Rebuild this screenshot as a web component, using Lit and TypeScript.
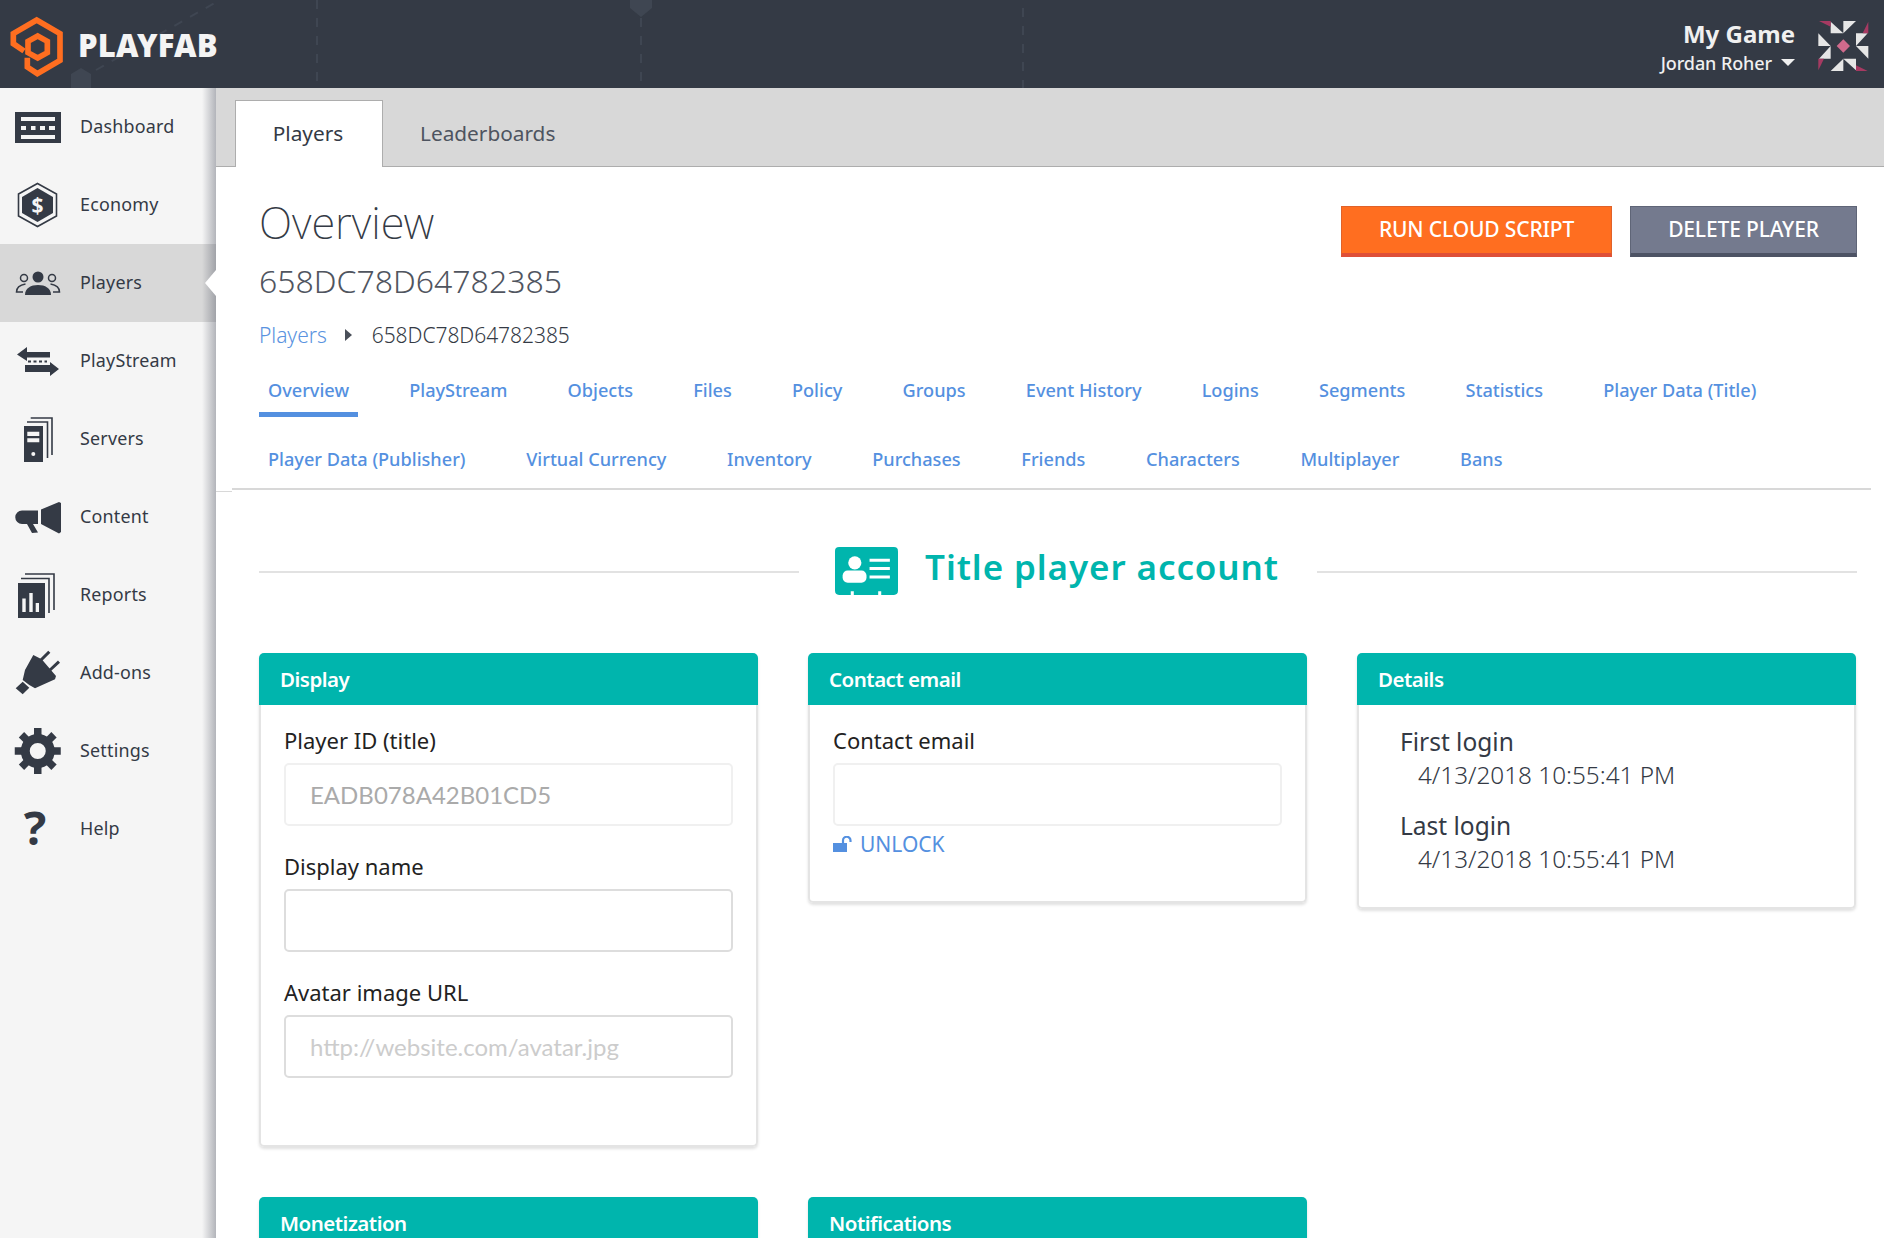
import { LitElement, html, css, svg } from 'lit';
import { customElement } from 'lit/decorators.js';

const gearTeeth = [0, 45, 90, 135, 180, 225, 270, 315];

const navItems = [
    { label: 'Dashboard', icon: svg`<rect x="3" y="11" width="46" height="31" fill="currentColor"/><path d="M9 16h34v4H9zM9 25h5v4H9zM19 25h4.500v4H19zM28 25h5v4h-5zM37 25h6v4h-6zM9 34h34v4H9z" fill="#f5f5f5"/>` },
    { label: 'Economy', icon: svg`<path d="M25.500 4.500 44.500 15v22l-19 10.500L6.500 37V15z" fill="none" stroke="currentColor" stroke-width="1.600"/><path d="M25.500 9 41 18v16l-15.500 9L10 34V18z" fill="currentColor"/><text x="25.500" y="33.500" text-anchor="middle" class="glyph" font-size="21" fill="#f5f5f5">$</text>` },
    { label: 'Players', icon: svg`<circle cx="26" cy="20" r="5.500" fill="currentColor"/><path d="M13 38c0-7 6-10 13-10s13 3 13 10z" fill="currentColor"/><g fill="none" stroke="currentColor" stroke-width="1.500"><circle cx="12" cy="21" r="3.500"/><circle cx="40" cy="21" r="3.500"/><path d="M11 35H4.500c0-4 3-7 9-8M41 35h6.500c0-4-3-7-9-8"/></g>` },
    { label: 'PlayStream', icon: svg`<path d="M5 19.500 15 12v5h23v5.500H15V26z" fill="currentColor"/><path d="M16 26.500h19" stroke="currentColor" stroke-width="2" stroke-dasharray="3 2.500"/><path d="M13 30h25v-3l9 7-9 7v-4H13z" fill="currentColor"/>` },
    { label: 'Servers', icon: svg`<rect x="12" y="13" width="19" height="36" fill="currentColor"/><path d="M15.300 18.700h12V23h-12zM15.300 25.300h12v4h-12z" fill="#f5f5f5"/><circle cx="21.300" cy="41" r="2" fill="#f5f5f5"/><path d="M15 9h20.500v36M18.700 5H40v37" fill="none" stroke="currentColor" stroke-width="1.600"/>` },
    { label: 'Content', icon: svg`<path d="M10 19.500h16V33H10a6.750 6.750 0 0 1 0-13.500zM15 33h6l5 8.500-6 .5zM29 18.500 47 11l2 1v29l-2 1.500L29 33z" fill="currentColor"/>` },
    { label: 'Reports', icon: svg`<rect x="6" y="14" width="27" height="35" fill="currentColor"/><path d="M10.300 29.500h3.400V43h-3.400zM17.300 24h3.400v19h-3.400zM23.700 34H27v9h-3.300z" fill="#f5f5f5"/><path d="M9 9.500h28V44M13 5h29v36" fill="none" stroke="currentColor" stroke-width="1.600"/>` },
    { label: 'Add-ons', icon: svg`<path d="m13 23 8.300-15 8.400 4.300L44 29l-1 3.300-20 9-5.700-3.300-6.600-5zM3.700 41.300l7-6.600 6.600 6-6.600 6.600z" fill="currentColor"/><path d="m28 14 9.300-9.300M38 23l9-8.300" stroke="currentColor" stroke-width="3"/>` },
    { label: 'Settings', icon: svg`<g fill="currentColor">${gearTeeth.map(a => svg`<rect x="22" y="3" width="7.500" height="10" transform="rotate(${a} 25.750 26)"/>`)}</g><circle cx="25.750" cy="26" r="12.500" fill="none" stroke="currentColor" stroke-width="9"/>` },
    { label: 'Help', icon: svg`<text x="23" y="42" text-anchor="middle" class="glyph" font-size="47" fill="currentColor">?</text>` },
];

const tabRows = [
    ['Overview', 'PlayStream', 'Objects', 'Files', 'Policy', 'Groups', 'Event History', 'Logins', 'Segments', 'Statistics', 'Player Data (Title)'],
    ['Player Data (Publisher)', 'Virtual Currency', 'Inventory', 'Purchases', 'Friends', 'Characters', 'Multiplayer', 'Bans'],
];

@customElement('app-root')
export class AppRoot extends LitElement {
    static get styles() {
        return css`
            :host {
                display: block;
                height: 1238px;
                overflow: hidden;
                font-family: "Noto Sans", "Open Sans", sans-serif;
                color: #343a45;
                background: #fff;
            }

            .glyph {
                font-family: "Noto Sans", sans-serif;
                font-weight: 700;
            }

            .topbar {
                position: relative;
                display: flex;
                align-items: center;
                justify-content: space-between;
                height: 88px;
                background: #343a45;
                overflow: hidden;
            }

            .backdrop {
                position: absolute;
                left: 0;
                top: 0;
            }

            .brand {
                position: relative;
                display: flex;
                align-items: center;
                gap: 12px;
                padding-top: 2px;
            }

            .brand-name {
                font-size: 31px;
                font-weight: 900;
                letter-spacing: 0.2px;
                color: #f4f4f4;
            }

            .account {
                position: relative;
                display: flex;
                align-items: center;
                gap: 5px;
                color: #f0f0f0;
            }

            .account-text {
                display: flex;
                flex-direction: column;
                align-items: flex-end;
                padding-top: 5px;
            }

            .game {
                font-size: 24px;
                font-weight: 700;
                line-height: 32px;
            }

            .user {
                display: flex;
                align-items: center;
                gap: 9px;
                font-size: 18px;
                font-weight: 500;
                line-height: 26px;
                letter-spacing: -0.1px;
            }

            .caret {
                width: 0;
                height: 0;
                border-left: 7px solid transparent;
                border-right: 7px solid transparent;
                border-top: 7px solid #f0f0f0;
            }

            .layout {
                display: flex;
                height: 1150px;
            }

            .sidebar {
                position: relative;
                flex: 0 0 216px;
                background: #f5f5f5;
            }

            .sidebar::after {
                content: "";
                position: absolute;
                top: 0;
                right: 0;
                bottom: 0;
                width: 14px;
                background: linear-gradient(to right, rgba(70, 75, 90, 0), rgba(70, 75, 90, 0.38));
            }

            .nav-item {
                position: relative;
                display: flex;
                align-items: center;
                height: 78px;
                padding-left: 12px;
                font-size: 17.9px;
                letter-spacing: 0.2px;
            }

            .nav-item svg {
                flex: 0 0 52px;
                margin-right: 16px;
                overflow: visible;
            }

            .nav-item span {
                margin-top: -3px;
            }

            .nav-item.active {
                background: #d8d8d8;
            }

            .nav-item.active::after {
                content: "";
                position: absolute;
                right: 0;
                top: 26px;
                z-index: 1;
                border-top: 13px solid transparent;
                border-bottom: 13px solid transparent;
                border-right: 11px solid #fff;
            }

            .main {
                flex: 1;
                min-width: 0;
            }

            .tabbar {
                display: flex;
                align-items: flex-end;
                height: 79px;
                padding-left: 19px;
                box-sizing: border-box;
                background: #d8d8d8;
                border-bottom: 1px solid #adadad;
                font-size: 20.8px;
            }

            .tab {
                display: flex;
                align-items: center;
                justify-content: center;
                height: 66px;
                margin-bottom: -1px;
                padding: 0 37px 2px;
                box-sizing: border-box;
                color: #4e5460;
            }

            .tab.active {
                width: 148px;
                height: 67px;
                padding: 0 2px 2px 0;
                background: #fff;
                border: 1px solid #adadad;
                border-bottom: none;
                color: #343a45;
            }

            .content {
                padding: 38px 27px 0 43px;
            }

            .head {
                display: flex;
                justify-content: space-between;
                align-items: flex-start;
            }

            h1 {
                margin: -11px 0 0;
                font-size: 43.5px;
                font-weight: 200;
                line-height: 56px;
                color: #343a45;
            }

            .player-id {
                font-size: 32px;
                font-weight: 300;
                line-height: 44px;
                margin-top: 9px;
                color: #50555f;
            }

            .actions {
                display: flex;
                gap: 18px;
                margin-top: 1px;
            }

            .btn {
                display: flex;
                align-items: center;
                justify-content: center;
                height: 51px;
                padding-bottom: 2px;
                box-sizing: border-box;
                font-size: 21px;
                font-weight: 500;
                color: #fff;
                letter-spacing: -0.15px;
            }

            .btn.run {
                width: 271px;
                background: #ff6e20;
                border: 1px solid #e0622a;
                border-bottom: 4px solid #de4f38;
            }

            .btn.delete {
                width: 227px;
                background: #747a8e;
                border: 1px solid #5f6577;
                border-bottom: 4px solid #4d5364;
            }

            .crumbs {
                display: flex;
                align-items: center;
                margin-top: 17px;
                height: 30px;
                font-size: 21px;
                font-weight: 300;
                letter-spacing: -0.05px;
                color: #343a45;
            }

            .crumbs a {
                color: #5a93e0;
            }

            .crumb-arrow {
                margin: 0 20px 0 18px;
                border-top: 6px solid transparent;
                border-bottom: 6px solid transparent;
                border-left: 7px solid #4a4f59;
            }

            .subnav {
                position: relative;
                margin: 13px -14px 0 -27px;
                padding: 0 0 2px 27px;
                border-bottom: 2px solid #d8d8d8;
            }

            .subnav::after {
                content: "";
                position: absolute;
                left: -16px;
                bottom: -4px;
                width: 16px;
                height: 1px;
                background: #d8d8d8;
            }

            .subnav-row {
                display: flex;
                gap: 42.2px;
                height: 68.5px;
                align-items: flex-start;
                box-sizing: border-box;
            }

            .subnav-row:last-child {
                gap: 42.7px;
                height: 54px;
            }

            .subnav-item {
                display: flex;
                align-items: center;
                height: 54px;
                padding: 0 9px;
                box-sizing: border-box;
                font-size: 18.15px;
                font-weight: 500;
                color: #5490e0;
            }

            .subnav-item.active {
                border-bottom: 5px solid #5490e0;
                padding-top: 5px;
            }

            .title {
                display: flex;
                align-items: center;
                margin-top: 49px;
                height: 64px;
            }

            .title-rule {
                flex: 1;
                height: 2px;
                margin-top: 2px;
                background: #e2e2e2;
            }

            .title-icon {
                margin: 0 27px 0 36px;
            }

            .title-text {
                margin-right: 38px;
                margin-top: -8px;
                font-size: 35px;
                font-weight: 600;
                letter-spacing: 0.9px;
                color: #00b5ad;
            }

            .cards {
                display: grid;
                grid-template-columns: repeat(3, 499px);
                column-gap: 50px;
                row-gap: 50px;
                align-items: start;
                margin-top: 50px;
            }

            .card {
                border-radius: 5px;
                background: #fff;
                box-shadow: 0 2px 3px rgba(0, 0, 0, 0.12);
            }

            .card-head {
                display: flex;
                align-items: center;
                height: 52px;
                padding-left: 21px;
                border-radius: 5px 5px 0 0;
                background: #00b5ad;
                color: #fff;
                font-size: 20.5px;
                font-weight: 600;
                letter-spacing: -0.5px;
            }

            .card-body {
                padding: 24px 23px 0;
                box-sizing: border-box;
                border: 2px solid #e4e4e4;
                border-top: none;
                border-radius: 0 0 5px 5px;
            }

            .display .card-body {
                height: 442px;
            }

            .contact .card-body {
                height: 198px;
            }

            .details .card-body {
                height: 204px;
                padding: 20px 0 0 41px;
            }

            label {
                display: block;
                height: 22px;
                line-height: 22px;
                margin-bottom: 12px;
                font-size: 22px;
                color: #222;
            }

            input {
                display: block;
                width: 100%;
                height: 63px;
                margin-bottom: 29px;
                padding: 0 24px;
                box-sizing: border-box;
                border: 2px solid #ddd;
                border-radius: 5px;
                background: #fff;
                outline: none;
                font-family: Lato, sans-serif;
                font-size: 24px;
                color: #333;
            }

            input::placeholder {
                color: #ccc;
                opacity: 1;
            }

            input:disabled {
                border-color: #f0f0f0;
                color: #aaa;
            }

            .contact input {
                margin-bottom: 4px;
            }

            .unlock {
                display: flex;
                align-items: center;
                gap: 7px;
                height: 28px;
                font-size: 21px;
                color: #5490e0;
            }

            .term {
                font-size: 24.5px;
                line-height: 34px;
                color: #343a45;
            }

            .value {
                margin: 0 0 18px 18px;
                font-size: 24.3px;
                font-weight: 300;
                line-height: 32px;
                color: #343a45;
            }
        `;
    }

    renderLogo() {
        return html`<svg width="66" height="88" viewBox="0 0 198 264">
            <g fill="none" stroke="#ff6e20" stroke-width="17" stroke-linejoin="miter">
                <path d="M72 150 40 128V98l70-41 70 41v80l-68 40-30-20v-28"/>
                <path d="M113 105l29 16v34l-29 16-29-16v-34z"/>
            </g>
        </svg>`;
    }

    renderAvatar() {
        return html`<svg width="84" height="70" viewBox="0 0 252 210" style="margin-top:2px">
            ${[0, 90, 180, 270].map(a => svg`<g transform="rotate(${a} 130 108)">
                <path d="M92 35l38 35H92zM130 33h38l-38 37z" fill="#e6e6e6"/>
                <path d="M57 33h35v17z" fill="#a63a62"/>
            </g>`)}
            <path d="M130 88l20 20-20 20-20-20z" fill="#d06a8c"/>
        </svg>`;
    }

    render() {
        return html`
            <header class="topbar">
                <svg class="backdrop" width="1884" height="88">
                    <g stroke="#3f4652" stroke-width="2" stroke-dasharray="9 9" fill="none">
                        <path d="M317 0V88M641 18V88M1023 8V88"/>
                        <path d="M96 70 220 0" />
                    </g>
                    <path d="M630 0h22v8l-11 9-11-9zM81 68l10 6v14H71V74z" fill="#3f4652"/>
                </svg>
                <div class="brand">
                    ${this.renderLogo()}
                    <span class="brand-name">PLAYFAB</span>
                </div>
                <div class="account">
                    <div class="account-text">
                        <span class="game">My Game</span>
                        <span class="user">Jordan Roher <span class="caret"></span></span>
                    </div>
                    ${this.renderAvatar()}
                </div>
            </header>
            <div class="layout">
                <nav class="sidebar">
                    ${navItems.map(item => html`
                        <div class="nav-item ${item.label === 'Players' ? 'active' : ''}">
                            <svg width="52" height="52" viewBox="0 0 52 52">${item.icon}</svg>
                            <span>${item.label}</span>
                        </div>`)}
                </nav>
                <main class="main">
                    <div class="tabbar">
                        <div class="tab active">Players</div>
                        <div class="tab">Leaderboards</div>
                    </div>
                    <div class="content">
                        <div class="head">
                            <div>
                                <h1>Overview</h1>
                                <div class="player-id">658DC78D64782385</div>
                            </div>
                            <div class="actions">
                                <div class="btn run">RUN CLOUD SCRIPT</div>
                                <div class="btn delete">DELETE PLAYER</div>
                            </div>
                        </div>
                        <div class="crumbs">
                            <a>Players</a>
                            <span class="crumb-arrow"></span>
                            <span>658DC78D64782385</span>
                        </div>
                        <div class="subnav">
                            ${tabRows.map(row => html`
                                <div class="subnav-row">
                                    ${row.map(t => html`<div class="subnav-item ${t === 'Overview' ? 'active' : ''}">${t}</div>`)}
                                </div>`)}
                        </div>
                        <div class="title">
                            <div class="title-rule"></div>
                            <svg class="title-icon" width="63" height="48" viewBox="0 0 62 47">
                                <rect width="62" height="47" rx="4" fill="#00b5ad"/>
                                <circle cx="19.500" cy="15.500" r="6.500" fill="#fff"/>
                                <rect x="7.500" y="23" width="23.500" height="12" rx="5" fill="#fff"/>
                                <path d="M34 11.500h20v3H34zM34 19.500h20v3H34zM34 28h20v3H34zM15.500 43.500h3V47h-3zM42.500 43.500h3V47h-3z" fill="#fff"/>
                            </svg>
                            <span class="title-text">Title player account</span>
                            <div class="title-rule"></div>
                        </div>
                        <div class="cards">
                            <section class="card display">
                                <div class="card-head">Display</div>
                                <div class="card-body">
                                    <label>Player ID (title)</label>
                                    <input disabled value="EADB078A42B01CD5" />
                                    <label>Display name</label>
                                    <input />
                                    <label>Avatar image URL</label>
                                    <input placeholder="http://website.com/avatar.jpg" />
                                </div>
                            </section>
                            <section class="card contact">
                                <div class="card-head">Contact email</div>
                                <div class="card-body">
                                    <label>Contact email</label>
                                    <input disabled />
                                    <div class="unlock">
                                        <svg width="20" height="16" viewBox="0 0 20 16">
                                            <rect x="0" y="7" width="14" height="9" fill="#5490e0"/>
                                            <path d="M10 7V4.500a3.500 3.500 0 0 1 7.500 0V6" fill="none" stroke="#5490e0" stroke-width="2.200"/>
                                        </svg>
                                        <span>UNLOCK</span>
                                    </div>
                                </div>
                            </section>
                            <section class="card details">
                                <div class="card-head">Details</div>
                                <div class="card-body">
                                    <div class="term">First login</div>
                                    <div class="value">4/13/2018 10:55:41 PM</div>
                                    <div class="term">Last login</div>
                                    <div class="value">4/13/2018 10:55:41 PM</div>
                                </div>
                            </section>
                            <section class="card">
                                <div class="card-head">Monetization</div>
                            </section>
                            <section class="card">
                                <div class="card-head">Notifications</div>
                            </section>
                        </div>
                    </div>
                </main>
            </div>
        `;
    }
}
